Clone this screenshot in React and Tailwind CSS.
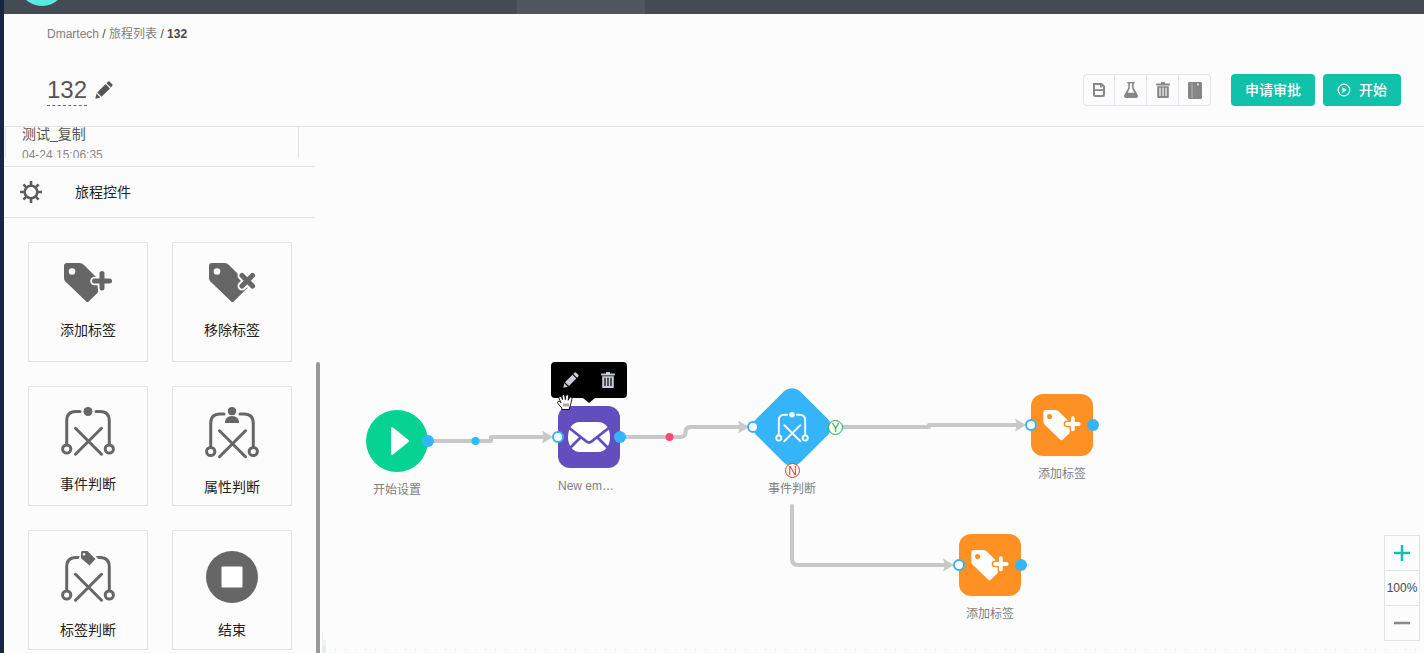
import React from "react";

function Pencil({ className }) {
  return (
    <svg className={className} viewBox="0 0 18 18" fill="currentColor" aria-hidden="true">
      <path d="M0.3 17.7 1.5 12.6 5.4 16.5Z" />
      <path d="M2.2 11.4 10.6 3 15 7.4 6.6 15.8Z" />
      <path d="M11.5 2.2 13.2 0.6Q13.9 0 14.5 0.6L17.4 3.5Q18 4.1 17.4 4.8L15.8 6.5Z" />
    </svg>
  );
}

function Trash({ className }) {
  return (
    <svg className={className} viewBox="0 0 14 16" aria-hidden="true">
      <path fill="currentColor" d="M5 0H9V1.5H13.8V3.4H.2V1.5H5Z" />
      <path
        fill="currentColor"
        fillRule="evenodd"
        d="M1.2 4.2H12.8V15Q12.8 16 11.8 16H2.2Q1.2 16 1.2 15ZM3.4 5.8V14H4.6V5.8ZM6.4 5.8V14H7.6V5.8ZM9.4 5.8V14H10.6V5.8Z"
      />
    </svg>
  );
}

function Save() {
  return (
    <svg className="h-4 w-3" viewBox="0 0 12 16" aria-hidden="true">
      <path d="M1 2H8.4L11 4.4V13Q11 14 10 14H2Q1 14 1 13Z" fill="none" stroke="currentColor" strokeWidth="2" />
      <path d="M1 8.2H11M7.8 2.5V5.5" fill="none" stroke="currentColor" strokeWidth="1.8" />
    </svg>
  );
}

function Flask() {
  return (
    <svg className="h-4 w-3.5" viewBox="0 0 14 16" aria-hidden="true">
      <path d="M3.2 0H10.8V1.2H9.7V5.8L13.8 13.2Q14.6 16 12 16H2Q-.6 16 .2 13.2L4.3 5.8V1.2H3.2Z" fill="currentColor" />
      <path d="M5.9 1.2H8.1V6.2L10.3 10.8H3.7L5.9 6.2Z" fill="#fcfcfc" />
    </svg>
  );
}

function Book() {
  return (
    <svg className="h-[17px] w-3.5" viewBox="0 0 14 17" aria-hidden="true">
      <rect width="14" height="17" rx="1.4" fill="currentColor" />
      <path d="M4 1V16" stroke="#c4c4c4" strokeWidth=".8" />
      <rect x="9" y="1.2" width="1.8" height="2.4" fill="#d5d5d5" />
    </svg>
  );
}

function Gear() {
  return (
    <svg className="size-[22px]" viewBox="0 0 22 22" fill="none" stroke="currentColor" aria-hidden="true">
      <circle cx="11" cy="11" r="6.3" strokeWidth="2.6" />
      <path
        strokeWidth="2.6"
        d="M11 0V4M11 18V22M0 11H4M18 11H22M3.4 3.4 6.3 6.3M15.7 15.7 18.6 18.6M3.4 18.6 6.3 15.7M15.7 6.3 18.6 3.4"
      />
    </svg>
  );
}

function TagPlus({ className, gap = "#fcfcfc" }) {
  return (
    <svg className={className} viewBox="0 0 48 40" aria-hidden="true">
      <path d="M3 0H15.5Q18 0 20 2L37 19 33.5 30 24.6 38.6Q23.4 39.6 22.2 38.6L1.4 18.6Q0 17 0 15V3Q0 0 3 0Z" fill="currentColor" />
      <circle cx="8" cy="8.5" r="3.3" fill={gap} />
      <path d="M38 10.5V25M30.5 18H45.5" stroke={gap} strokeWidth="8.6" strokeLinecap="round" />
      <path d="M38 10.5V25M30.5 18H45.5" stroke="currentColor" strokeWidth="5" strokeLinecap="round" />
    </svg>
  );
}

function TagCross() {
  return (
    <svg className="h-10 w-[47px]" viewBox="0 0 47 40" aria-hidden="true">
      <path d="M3 0H15.5Q18 0 20 2L38.5 20.5V25L24.6 38.6Q23.4 39.6 22.2 38.6L1.4 18.6Q0 17 0 15V3Q0 0 3 0Z" fill="currentColor" />
      <circle cx="8" cy="8.5" r="3.3" fill="#fcfcfc" />
      <path d="M33 12.5 43.5 23M43.5 12.5 33 23" stroke="#fcfcfc" strokeWidth="9" strokeLinecap="round" />
      <path d="M33 12.5 43.5 23M43.5 12.5 33 23" stroke="currentColor" strokeWidth="5.2" strokeLinecap="round" />
    </svg>
  );
}

/* Branch frame shared by the three "判断" controls. */
function BranchFrame() {
  return (
    <g fill="none" stroke="currentColor" strokeLinecap="round" strokeWidth="3">
      <path d="M5.7 35V12Q5.7 2.500 15 2.500H19M35 2.500H39Q48.300 2.500 48.300 12V35" />
      <path d="M14.500 19.300 40.500 45.200M40.500 19.300 14.500 45.200" />
      <circle cx="5.7" cy="40" r="4.100" />
      <circle cx="48.300" cy="40" r="4.100" />
    </g>
  );
}

function EventBranch({ className }) {
  return (
    <svg className={className} viewBox="0 0 54 50" aria-hidden="true">
      <g transform="translate(0 2)">
        <BranchFrame />
      </g>
      <circle cx="27" cy="4.500" r="4.500" fill="currentColor" />
    </svg>
  );
}

function PersonBranch() {
  return (
    <svg className="h-[53px] w-[54px]" viewBox="0 0 54 53" aria-hidden="true">
      <g transform="translate(0 4.500)">
        <BranchFrame />
      </g>
      <path d="M18.200 17.500Q18 8 27 8 36 8 35.800 17.500Z" fill="#fcfcfc" />
      <circle cx="27" cy="4.200" r="4.100" fill="currentColor" />
      <path d="M19.800 16Q20.300 9 27 9 33.700 9 34.200 16Z" fill="currentColor" />
    </svg>
  );
}

function TagBranch() {
  return (
    <svg className="h-[52px] w-[54px]" viewBox="0 0 54 52" aria-hidden="true">
      <g transform="translate(0 4)">
        <BranchFrame />
      </g>
      <path d="M21.500 -1.500H28L37.500 8 29 17.500 17.500 8Z" fill="#fcfcfc" />
      <path d="M21.500 0H26.500L34.500 8 28.500 14.600 20 7.200V1.500Q20 0 21.500 0Z" fill="currentColor" />
      <circle cx="23" cy="3.300" r="1.200" fill="#fcfcfc" />
    </svg>
  );
}

function Stop() {
  return (
    <svg className="size-[52px]" viewBox="0 0 52 52" aria-hidden="true">
      <circle cx="26" cy="26" r="26" fill="currentColor" />
      <rect x="15.500" y="15.500" width="21" height="21" rx="1" fill="#fff" />
    </svg>
  );
}

function Envelope() {
  return (
    <svg className="h-[30px] w-[42px]" viewBox="0 0 42 30" aria-hidden="true">
      <path d="M12 0H30C38 0 42 7 42 15S38 30 30 30H12C4 30 0 23 0 15S4 0 12 0Z" fill="#fff" />
      <path
        d="M0 5 18.500 19.500Q21 21.500 23.500 19.500L42 5M1 27 12.500 15.500M41 27 29.500 15.500"
        fill="none"
        stroke="#624ebf"
        strokeWidth="2.800"
      />
    </svg>
  );
}

function HandCursor() {
  return (
    <svg className="absolute left-1.5 top-8 h-4 w-4" viewBox="0 0 16 16" aria-hidden="true">
      <path
        d="M4.800 15.500V14Q3.500 12.300 1 9.600 0 8 1.300 7.300 2.500 7 3.900 8.600L2 4.300Q1.600 2.700 2.900 2.300 4.200 2 4.800 3.600L5.600 5.600 5 2Q5 .5 6.400 .5 7.700 .5 7.900 2L8.300 5.600 8.700 2Q9.200 .6 10.500 .8 11.800 1.100 11.500 2.600L11.200 6.200 12.300 4Q13.100 2.700 14.300 3.200 15.400 3.800 14.900 5.300L13.800 9.500Q13.600 12 12.300 14V15.500Z"
        fill="#fff"
        stroke="#000"
        strokeWidth=".9"
      />
      <path d="M7 9.500V12.500M9 9.500V12.500M11 9.500V12.500" stroke="#000" strokeWidth=".7" />
    </svg>
  );
}

const tools = [
  { label: "保存", icon: <Save /> },
  { label: "测试", icon: <Flask /> },
  { label: "删除", icon: <Trash className="h-4 w-3.5" /> },
  { label: "文档", icon: <Book /> },
];

const controls = [
  { label: "添加标签", icon: <TagPlus className="h-10 w-12" /> },
  { label: "移除标签", icon: <TagCross /> },
  { label: "事件判断", icon: <EventBranch className="h-[50px] w-[54px]" /> },
  { label: "属性判断", icon: <PersonBranch /> },
  { label: "标签判断", icon: <TagBranch /> },
  { label: "结束", icon: <Stop /> },
];

function Header() {
  return (
    <header className="flex h-[113px] shrink-0 flex-col border-b border-[#e1e2e8] pl-[43px] pr-[23px] pt-3">
      <nav aria-label="面包屑" className="text-xs leading-4 text-[#484848]">
        <a href="#home" className="text-[#808080]">Dmartech</a> /{" "}
        <a href="#journeys" className="text-[#808080]">旅程列表</a> / <b>132</b>
      </nav>
      <div className="mt-8 flex items-center">
        <h1 className="border-b border-dashed border-[#666] text-2xl leading-[30px] text-[#555]">132</h1>
        <button aria-label="编辑名称" className="ml-2 text-[#555]">
          <Pencil className="size-[18px]" />
        </button>
        <div className="ml-auto flex divide-x divide-[#e1e4ea] rounded border border-[#e1e4ea]">
          {tools.map((t) => (
            <button key={t.label} aria-label={t.label} className="flex h-[30px] w-8 items-center justify-center text-[#868686] first:w-[31px] last:w-[31px]">
              {t.icon}
            </button>
          ))}
        </div>
        <button className="ml-5 h-8 rounded bg-[#10c2aa] px-3.5 text-sm font-medium text-white">申请审批</button>
        <button className="ml-2 flex h-8 items-center gap-2 rounded bg-[#10c2aa] px-3.5 text-sm font-medium text-white">
          <svg className="size-3.5" viewBox="0 0 14 14" aria-hidden="true">
            <circle cx="7" cy="7" r="5.800" fill="none" stroke="currentColor" strokeWidth="1.200" />
            <path d="M5.400 4.200 9.800 7 5.400 9.800Z" fill="currentColor" />
          </svg>
          开始
        </button>
      </div>
    </header>
  );
}

function Sidebar() {
  return (
    <aside className="flex w-[316px] shrink-0">
      <div className="flex min-w-0 flex-1 flex-col">
        <div className="ml-px flex h-[31px] w-[294px] shrink-0 flex-col justify-end overflow-hidden border-x border-[#e1e2e8] pl-4">
          <p className="-mb-[5px] shrink-0 text-sm leading-5 text-[#555]">
            测试_复制
            <time className="block pt-[3px] text-xs leading-4 text-[#8a8a8a]">04-24 15:06:35</time>
          </p>
        </div>
        <button className="mt-2 flex h-[52px] w-[310px] shrink-0 items-center border-y border-[#e1e2e8] pl-4 text-sm text-[#222]">
          <span className="text-[#5c5c5c]"><Gear /></span>
          <span className="ml-[33px]">旅程控件</span>
        </button>
        <div className="grid grid-cols-[120px_120px] gap-6 pl-6 pt-6">
          {controls.map((c) => (
            <button key={c.label} className="flex h-[120px] flex-col items-center border border-[#e1e2e8] pt-5 text-sm text-[#222]">
              <span className="mb-[17px] text-[#666]">{c.icon}</span>
              <span className="leading-5">{c.label}</span>
            </button>
          ))}
        </div>
      </div>
      <div className="-ml-1 mt-[235px] w-1 shrink-0 rounded-t bg-[#999]" />
    </aside>
  );
}

function Edges() {
  return (
    <svg className="absolute inset-0 h-full w-full" aria-hidden="true">
      <g transform="translate(-320 -127)">
        <path d="M322 631h1v9h3v13h-4z" fill="#e8f5f8" />
        <path d="M322 646h4v7h-4z" fill="#e9eaf2" />
        <path d="M335 649.500H1424" stroke="#dedee4" strokeDasharray="1 9" />
        <g fill="none" stroke="#c8c8c8" strokeWidth="4" strokeLinejoin="round">
          <path d="M428 441H491V437H547" />
          <path d="M620 437H680Q685 437 685.500 433V431Q686 427 691 427H743" />
          <path d="M836 427H929V425H1019" />
          <path d="M792 506V559Q792 565 798 565H947" strokeLinecap="round" />
        </g>
        <g fill="#c8c8c8">
          <path d="M542 430.500 553 437 542 443.500 544 437Z" />
          <path d="M738 420.500 749 427 738 433.500 740 427Z" />
          <path d="M1015 418.500 1026 425 1015 431.500 1017 425Z" />
          <path d="M943 558.500 954 565 943 571.500 945 565Z" />
        </g>
        <circle cx="475.500" cy="441" r="4" fill="#2bbcff" />
        <circle cx="669.500" cy="437" r="4" fill="#ff4776" />
      </g>
    </svg>
  );
}

function PortIn() {
  return <span className="absolute -left-1.5 top-1/2 size-3 -translate-y-1/2 rounded-full border-2 border-[#36b4fa] bg-white" />;
}

function PortOut() {
  return <span className="absolute -right-1.5 top-1/2 size-3 -translate-y-1/2 rounded-full bg-[#36b4fa]" />;
}

function Label({ children }) {
  return <p className="mt-2.5 whitespace-nowrap text-xs leading-4 text-[#808080]">{children}</p>;
}

function TagNode({ className }) {
  return (
    <div className={className}>
      <div className="relative size-[62px] rounded-xl bg-[#ff9124] pl-3 pt-4 text-white">
        <TagPlus className="h-[31px] w-[38px]" gap="#ff9124" />
        <PortIn />
        <PortOut />
      </div>
      <Label>添加标签</Label>
    </div>
  );
}

function Canvas() {
  return (
    <main className="relative min-w-0 flex-1 overflow-hidden">
      <Edges />

      <div className="absolute left-[46px] top-[283px] flex w-[62px] flex-col items-center">
        <div className="relative flex size-[62px] items-center justify-center rounded-full bg-[#06d291]">
          <svg className="ml-1.5 h-7 w-[18px]" viewBox="0 0 18 28" aria-hidden="true">
            <path d="M0 1.500Q0 -.5 2 .5L17.500 13Q18.500 14 17.500 15L2 27.500Q0 28.500 0 26.500Z" fill="#fff" />
          </svg>
          <PortOut />
        </div>
        <Label>开始设置</Label>
      </div>

      <div className="absolute left-[238px] top-[279px] w-[62px]">
        <div className="relative flex size-[62px] items-center justify-center rounded-xl bg-[#624ebf]">
          <Envelope />
          <PortIn />
          <PortOut />
        </div>
        <Label>New em…</Label>
      </div>

      <div className="absolute left-[231px] top-[235px] flex h-9 w-[76px] items-center justify-between rounded bg-black px-3 text-[#c9ced8]">
        <button aria-label="编辑"><Pencil className="size-4" /></button>
        <button aria-label="删除节点"><Trash className="h-4 w-3.5" /></button>
        <svg className="absolute left-8 top-9 h-[5px] w-3" viewBox="0 0 12 5" aria-hidden="true">
          <path d="M0 0H12L6 5Z" />
        </svg>
        <HandCursor />
      </div>

      <div className="absolute left-[433px] top-[261px] flex w-[78px] flex-col items-center">
        <div className="relative flex size-[78px] items-center justify-center">
          <div className="absolute left-2 top-2 size-[62px] rotate-45 rounded-xl bg-[#36b4fa]" />
          <EventBranch className="relative h-[31px] w-[34px] text-white" />
          <PortIn />
          <span className="absolute -right-3 top-8 flex size-[15px] items-center justify-center rounded-full border border-[#18ad3c] bg-white text-xs text-[#18ad3c]">Y</span>
          <span className="absolute -bottom-3 left-8 flex size-[15px] items-center justify-center rounded-full border border-[#dd3b2a] bg-white text-xs text-[#dd3b2a]">N</span>
        </div>
        <p className="mt-[15px] text-xs leading-4 text-[#808080]">事件判断</p>
      </div>

      <TagNode className="absolute left-[711px] top-[267px] flex w-[62px] flex-col items-center" />
      <TagNode className="absolute left-[639px] top-[407px] flex w-[62px] flex-col items-center" />

      <div className="absolute bottom-3 right-1 flex w-9 flex-col divide-y divide-[#e1e2e8] border border-[#e1e2e8] bg-[#fcfcfc]">
        <button aria-label="放大" className="flex h-[35px] items-center justify-center text-[#10c2aa]">
          <svg className="size-4" viewBox="0 0 16 16" aria-hidden="true">
            <path d="M8 0V16M0 8H16" stroke="currentColor" strokeWidth="2.500" />
          </svg>
        </button>
        <output className="flex h-[35px] items-center justify-center text-xs text-[#484848]">100%</output>
        <button aria-label="缩小" className="flex h-[34px] items-center justify-center text-[#8b8b8b]">
          <svg className="size-4" viewBox="0 0 16 16" aria-hidden="true">
            <path d="M0 8H16" stroke="currentColor" strokeWidth="2.600" />
          </svg>
        </button>
      </div>
    </main>
  );
}

export default function App() {
  return (
    <div className="flex h-screen flex-col overflow-hidden border-l-4 border-[#152744] bg-[#fcfcfc] font-['Liberation_Sans','Noto_Sans_CJK_SC',sans-serif]">
      <div className="relative flex h-3.5 shrink-0 overflow-hidden bg-[#454b53]">
        <span className="absolute -top-[42px] left-3.5 size-12 rounded-full bg-[#5ae8df]" />
        <span className="ml-[36.1%] w-32 bg-[#50575f]" />
      </div>
      <Header />
      <div className="flex min-h-0 flex-1">
        <Sidebar />
        <Canvas />
      </div>
    </div>
  );
}
